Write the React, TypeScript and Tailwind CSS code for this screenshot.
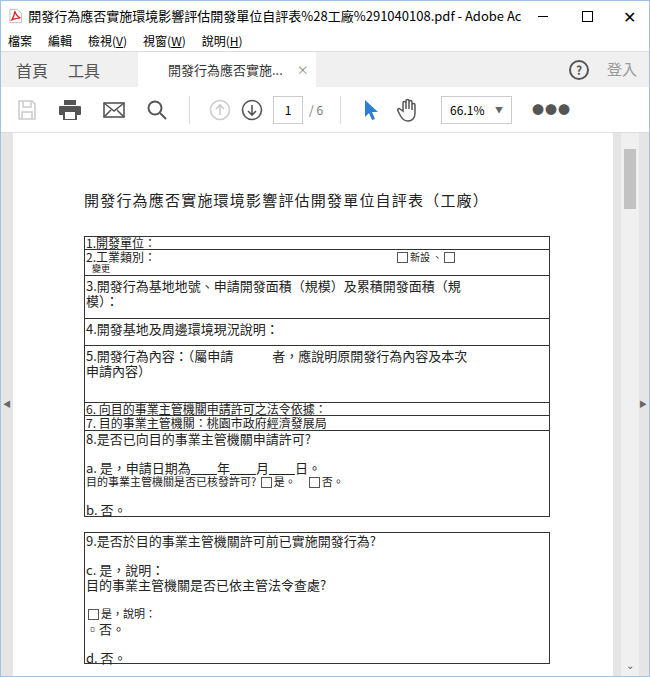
import React from 'react';

const ui = { fontFamily: '"Noto Sans CJK TC", "Liberation Sans", sans-serif' };
const doc = { fontFamily: '"Liberation Serif", "Noto Sans CJK TC", serif' };

function Box() {
  return <span className="inline-block w-[11px] h-[11px] border border-[#555] align-middle mx-[2px]" />;
}

export default function App() {
  return (
    <div className="w-[650px] h-[677px] overflow-hidden bg-white border border-[#9fc3e7] flex flex-col" style={ui}>
      {/* title bar */}
      <div className="h-[30px] flex items-center pl-[8px] text-[13px] text-black shrink-0">
        <svg width="14" height="16" viewBox="0 0 14 16"><path d="M1 1h8l4 4v10H1z" fill="#fff" stroke="#bbb" /><path d="M3 12c2-3 3-6 3-9 1 3 3 6 6 7-3 0-6 1-9 2z" fill="none" stroke="#e0231e" strokeWidth="1.3" /></svg>
        <span className="ml-[6px] whitespace-nowrap overflow-hidden">開發行為應否實施環境影響評估開發單位自評表%28工廠%291040108.pdf - Adobe Acro...</span>
        <div className="ml-auto flex items-center shrink-0">
          <span className="w-[44px] flex justify-center"><span className="w-[10px] h-px bg-black" /></span>
          <span className="w-[44px] flex justify-center"><span className="w-[11px] h-[11px] border border-black" /></span>
          <span className="w-[40px] flex justify-center text-[16px] font-light">✕</span>
        </div>
      </div>
      {/* menu */}
      <div className="h-[20px] flex items-center gap-[16px] pl-[7px] text-[12px] shrink-0">
        <span>檔案</span><span>編輯</span><span>檢視(<u>V</u>)</span><span>視窗(<u>W</u>)</span><span>說明(<u>H</u>)</span>
      </div>
      {/* tabs */}
      <div className="h-[36px] flex items-stretch bg-[#f0f0f0] border-t border-[#dcdcdc] shrink-0">
        <div className="flex items-center gap-[20px] pl-[15px] w-[137px] text-[16px] text-[#555]"><span>首頁</span><span>工具</span></div>
        <div className="w-[178px] bg-white flex items-center pl-[30px] text-[13px] text-[#333]">
          開發行為應否實施...<span className="ml-[14px] text-[#888] text-[12px]">×</span>
        </div>
        <div className="ml-auto flex items-center gap-[18px] pr-[12px]">
          <span className="w-[20px] h-[20px] rounded-full border-2 border-[#555] flex items-center justify-center text-[12px] font-bold text-[#555]">?</span>
          <span className="text-[15px] text-[#999]">登入</span>
        </div>
      </div>
      {/* toolbar */}
      <div className="h-[46px] flex items-center border-b border-[#ddd] shrink-0">
        <div className="flex items-center gap-[22px] pl-[16px] text-[#555]">
          <svg width="20" height="22" viewBox="0 0 20 22" fill="none" stroke="#ccc" strokeWidth="1.6"><path d="M2 2h13l3 3v15H2z" /><path d="M6 2v6h8V2M5 20v-7h10v7" /></svg>
          <svg width="22" height="20" viewBox="0 0 22 20" fill="#555"><rect x="5" y="0" width="12" height="5" /><rect x="0" y="6" width="22" height="9" rx="1" /><rect x="5" y="11" width="12" height="9" fill="#fff" stroke="#555" strokeWidth="2" /></svg>
          <svg width="22" height="16" viewBox="0 0 22 16" fill="none" stroke="#555" strokeWidth="1.6"><rect x="1" y="1" width="20" height="14" /><path d="M1 1l10 8 10-8M1 15l7-7M21 15l-7-7" /></svg>
          <svg width="20" height="20" viewBox="0 0 20 20" fill="none" stroke="#555" strokeWidth="2"><circle cx="8" cy="8" r="6.5" /><path d="M13 13l6 6" /></svg>
        </div>
        <span className="w-px h-[28px] bg-[#ddd] ml-[22px]" />
        <div className="flex items-center gap-[10px] ml-[19px]">
          <svg width="22" height="22" viewBox="0 0 22 22" fill="none" stroke="#ccc" strokeWidth="1.6"><circle cx="11" cy="11" r="9.5" /><path d="M11 16V6M7 10l4-4 4 4" /></svg>
          <svg width="22" height="22" viewBox="0 0 22 22" fill="none" stroke="#555" strokeWidth="1.6"><circle cx="11" cy="11" r="9.5" /><path d="M11 6v10M7 12l4 4 4-4" /></svg>
        </div>
        <div className="ml-[10px] w-[30px] h-[28px] border border-[#ccc] flex items-center justify-center text-[12px]">1</div>
        <span className="ml-[6px] text-[12px] text-[#777]">/ 6</span>
        <span className="w-px h-[28px] bg-[#ddd] ml-[17px]" />
        <svg className="ml-[22px]" width="16" height="22" viewBox="0 0 16 22"><path d="M2 1v17l4-4 3 7 3-1-3-7h6z" fill="#2d7fd6" /></svg>
        <svg className="ml-[18px]" width="22" height="24" viewBox="0 0 22 24" fill="none" stroke="#555" strokeWidth="1.5"><path d="M6 13V5a1.5 1.5 0 013 0v6V3a1.5 1.5 0 013 0v8V4a1.5 1.5 0 013 0v8V7a1.5 1.5 0 013 0v8c0 5-3 8-7 8s-6-2-8-6l-2-4c-1-2 1-3 2-2z" /></svg>
        <div className="ml-[22px] w-[71px] h-[28px] border border-[#ccc] flex items-center justify-between px-[8px] text-[12px]">66.1%<span className="text-[8px] text-[#666]">▼</span></div>
        <span className="ml-[20px] text-[#555] text-[12px] tracking-[1px] font-bold">●●●</span>
      </div>
      {/* content */}
      <div className="flex-1 bg-[#e5e5e5] flex relative">
        <div className="w-[12px]" />
        <div className="w-[600px] bg-white pt-[56px] pl-[71px] text-[#222]" style={doc}>
          <div className="text-[15px] tracking-[1.2px]" style={ui}>開發行為應否實施環境影響評估開發單位自評表（工廠）</div>
          <div className="mt-[24px] w-[466px] text-[12px] leading-[12px]" style={ui}>
            <div className="h-[14px] border border-[#333] px-[1px] overflow-hidden">1.開發單位：</div>
            <div className="h-[26px] border-x border-b border-[#333] px-[1px] relative leading-[14px]">
              2.工業類別：
              <div className="text-[9px] leading-[9px] pl-[6px]">變更</div>
              <div className="absolute left-[310px] top-[0px] text-[10px]"><Box />新設 、<Box /></div>
            </div>
            <div className="h-[43px] border-x border-b border-[#333] px-[1px] pt-[2px] text-[13px] leading-[15px] pr-[70px]">3.開發行為基地地號、申請開發面積（規模）及累積開發面積（規模）：</div>
            <div className="h-[27px] border-x border-b border-[#333] px-[1px] pt-[2px] text-[13px] leading-[15px]">4.開發基地及周邊環境現況說明：</div>
            <div className="h-[57px] border-x border-b border-[#333] px-[1px] pt-[2px] text-[13px] leading-[15px] pr-[70px]">5.開發行為內容：（屬申請　　　者，應說明原開發行為內容及本次申請內容）</div>
            <div className="h-[13px] border-x border-b border-[#333] px-[1px] overflow-hidden">6. 向目的事業主管機關申請許可之法令依據：</div>
            <div className="h-[15px] border-x border-b border-[#333] px-[1px] overflow-hidden leading-[14px]">7. 目的事業主管機關：桃園市政府經濟發展局</div>
            <div className="h-[86px] border-x border-b border-[#333] px-[1px] text-[13px] leading-[15px]">
              8.是否已向目的事業主管機關申請許可?
              <div className="mt-[14px]">a. 是，申請日期為<u>　　</u>年<u>　　</u>月<u>　　</u>日。</div>
              <div className="text-[11px] leading-[12px]">目的事業主管機關是否已核發許可? <Box />是。　<Box />否。</div>
              <div className="mt-[14px]">b. 否。</div>
            </div>
            <div className="mt-[15px] h-[132px] border border-[#333] px-[1px] text-[13px] leading-[15px]">
              9.是否於目的事業主管機關許可前已實施開發行為?
              <div className="mt-[14px]">c. 是，說明：</div>
              <div>目的事業主管機關是否已依主管法令查處?</div>
              <div className="mt-[14px] text-[11px]"><Box />是，說明：</div>
              <div>▫否。</div>
              <div className="mt-[14px]">d. 否。</div>
            </div>
          </div>
        </div>
        <div className="w-[8px]" />
        <div className="w-[18px] bg-[#f0f0f0] flex flex-col items-center">
          <div className="mt-[16px] w-[12px] h-[60px] bg-[#c2c2c2]" />
          <div className="mt-auto mb-[4px] text-[10px] text-[#666]">⌄</div>
        </div>
        <span className="absolute left-[2px] top-[265px] text-[8px] text-[#666]">◀</span>
        <span className="absolute right-[2px] top-[265px] text-[8px] text-[#666]">▶</span>
      </div>
    </div>
  );
}
